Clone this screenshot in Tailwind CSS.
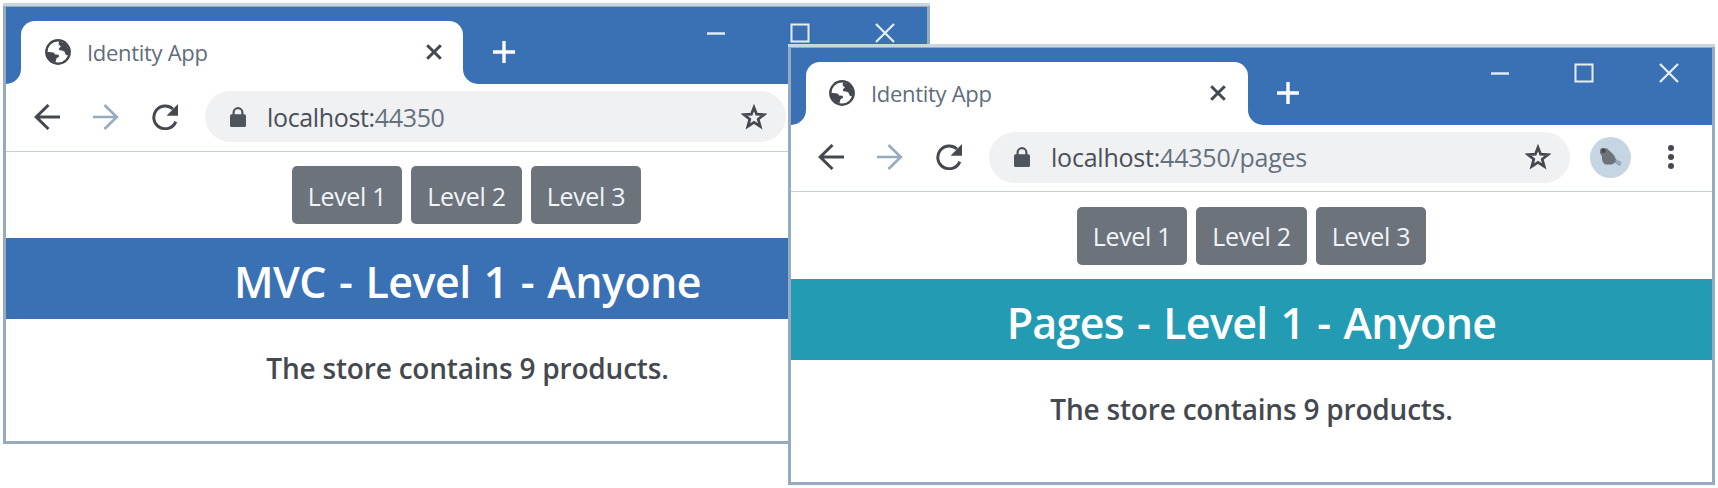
<!DOCTYPE html>
<html lang="en">
<head>
<meta charset="utf-8">
<title>Identity App</title>
<script src="https://cdn.jsdelivr.net/npm/@tailwindcss/browser@4"></script>
</head>
<body class="relative w-[1718px] h-[488px] overflow-hidden bg-white font-['Open_Sans','Noto_Sans',sans-serif] text-[#45484f]">

<svg class="hidden">
  <symbol id="globe" viewBox="0 0 26 26">
    <circle cx="13" cy="13" r="11.7" fill="none" stroke="currentColor" stroke-width="2.4"/>
    <path fill="currentColor" d="M14 2.2 21 4.8 24.4 12.5 22.8 16.4 20.6 15.6 19.6 12.8 17.2 11.6 14.4 11.2 13.8 9.4 16 7.2 13.6 5.4Z"/>
    <path fill="currentColor" d="M1.6 12.8 8.6 13.6 10.2 15.4 13.6 15.8 14.2 17.4 11.4 19.4 10.4 23.4 6.6 22 3 18Z"/>
  </symbol>
  <symbol id="close" viewBox="0 0 16 16"><path d="M1.2 1.2 14.8 14.8M14.8 1.2 1.2 14.8" stroke="currentColor" stroke-width="3" fill="none"/></symbol>
  <symbol id="plus" viewBox="0 0 22 22"><path d="M11 0V22M0 11H22" stroke="currentColor" stroke-width="3.4" fill="none"/></symbol>
  <symbol id="min" viewBox="0 0 20 20"><path d="M1 10.5H19" stroke="currentColor" stroke-width="2.4" fill="none"/></symbol>
  <symbol id="max" viewBox="0 0 20 20"><rect x="1.5" y="1.5" width="17" height="17" stroke="currentColor" stroke-width="2" fill="none"/></symbol>
  <symbol id="exit" viewBox="0 0 20 20"><path d="M1 1 19 19M19 1 1 19" stroke="currentColor" stroke-width="2.2" fill="none"/></symbol>
  <symbol id="back" viewBox="0 0 26 26"><path d="M26 13H2M14.5 1 2.2 13 14.5 25" stroke="currentColor" stroke-width="3" fill="none"/></symbol>
  <symbol id="forward" viewBox="0 0 26 26"><path d="M0 13H24M11.5 1 23.8 13 11.5 25" stroke="currentColor" stroke-width="2.6" fill="none"/></symbol>
  <symbol id="reload" viewBox="0 0 26 26"><path d="M23.8 17.6A11.4 11.4 0 1 1 21 5" stroke="currentColor" stroke-width="3" fill="none"/><path d="M26 0V11.8H14.6Z" fill="currentColor"/></symbol>
  <symbol id="lock" viewBox="0 0 16 20"><path d="M3.6 9V5.6a4.4 4.4 0 0 1 8.8 0V9" stroke="currentColor" stroke-width="2.2" fill="none"/><rect y="7.2" width="16" height="12.8" rx="1.6" fill="currentColor"/></symbol>
  <symbol id="star" viewBox="0 0 26 26"><path d="M13 3.4 15.6 10.2 23 10.6 17.2 15.2 19.2 22.4 13 18.3 6.8 22.4 8.8 15.2 3 10.6 10.4 10.2Z" stroke="currentColor" stroke-width="2.7" fill="none"/></symbol>
  <symbol id="bird" viewBox="0 0 24 20"><path d="M1 4Q1 1 4 1L8 1.5 15 8 17 12.5 22.5 15.5 20.5 19 16 15.5 13 17.5H6Q2.5 15 3 9.5L1 6Z" fill="#6c737b"/><path d="M17 12.5 22.5 15.5 20.5 19 16 15.5Z" fill="#96aac0"/><circle cx="4.5" cy="3.8" r="2.2" fill="#45484f"/></symbol>
</svg>

<!-- MVC window -->
<section class="absolute left-[3px] top-[3px] w-[927px] h-[441px] flex flex-col bg-white border-[#96aac0] border-x-[3px] border-b-[3px]">
  <div class="h-1 shrink-0 -mx-[3px] bg-[#c9d6e1] border-b border-[#96aac0]"></div>
  <header class="h-[77px] shrink-0 flex bg-[#3a71b5]">
    <div class="flex items-end">
      <div class="w-[15px] h-[30px] bg-white"><div class="h-full bg-[#3a71b5] rounded-br-[15px]"></div></div>
      <div class="w-[442px] h-[63px] pb-px bg-white rounded-t-[14px] flex items-center pl-[24px] pr-[21px]">
        <svg class="w-[26px] h-[26px]"><use href="#globe"/></svg>
        <span class="ml-[16px] text-[22px] leading-[30px] tracking-[-0.3px] text-[#5f6d7c] whitespace-nowrap">Identity App</span>
        <svg class="ml-auto w-4 h-4"><use href="#close"/></svg>
      </div>
      <div class="w-[15px] h-[30px] bg-white"><div class="h-full bg-[#3a71b5] rounded-bl-[15px]"></div></div>
      <svg class="ml-[15px] mb-[21px] w-[22px] h-[22px] text-white"><use href="#plus"/></svg>
    </div>
    <div class="ml-auto h-[51px] flex text-[#e8eef5]">
      <div class="w-[84.5px] grid place-items-center"><svg class="w-5 h-5"><use href="#min"/></svg></div>
      <div class="w-[84.5px] grid place-items-center"><svg class="w-5 h-5"><use href="#max"/></svg></div>
      <div class="w-[84.5px] grid place-items-center"><svg class="w-5 h-5"><use href="#exit"/></svg></div>
    </div>
  </header>
  <nav class="h-[68px] shrink-0 flex items-center pb-[2px] pl-7 border-b border-[#c3cfda]">
    <svg class="w-[26px] h-[26px]"><use href="#back"/></svg>
    <svg class="ml-[33px] w-[26px] h-[26px] text-[#96aac0]"><use href="#forward"/></svg>
    <svg class="ml-[33px] w-[26px] h-[26px]"><use href="#reload"/></svg>
    <div class="ml-[27px] w-[581px] h-[51px] rounded-full bg-[#eff1f3] flex items-center pl-[25px] pr-[19px]">
      <svg class="w-4 h-5 text-[#50545c]"><use href="#lock"/></svg>
      <span class="ml-[21px] text-[25px] leading-[34px] tracking-[-0.35px] text-[#65717f]"><span class="text-[#4a4f58]">localhost:</span>44350</span>
      <svg class="ml-auto w-[26px] h-[26px]"><use href="#star"/></svg>
    </div>
    <div class="ml-5 w-[41px] h-[41px] rounded-full bg-[#c5d5e1] grid place-items-center"><svg class="w-6 h-5"><use href="#bird"/></svg></div>
    <div class="ml-9 flex flex-col gap-[3px]"><i class="w-1.5 h-1.5 rounded-full bg-current"></i><i class="w-1.5 h-1.5 rounded-full bg-current"></i><i class="w-1.5 h-1.5 rounded-full bg-current"></i></div>
  </nav>
  <main class="text-center">
    <div class="flex justify-center gap-[9px] pt-[14px] pb-[14px] text-[25px] leading-[34px] tracking-[-0.3px] text-[#eff4f9]">
      <button class="w-[110.5px] h-[58px] pt-px rounded-[5px] bg-[#6c737b]">Level 1</button>
      <button class="w-[110.5px] h-[58px] pt-px rounded-[5px] bg-[#6c737b]">Level 2</button>
      <button class="w-[110.5px] h-[58px] pt-px rounded-[5px] bg-[#6c737b]">Level 3</button>
    </div>
    <h1 class="h-[81px] pt-[3px] pl-[2px] bg-[#3a71b5] text-white text-[43px] leading-[81px] font-semibold tracking-[-0.55px] [word-spacing:2.5px]">MVC - Level 1 - Anyone</h1>
    <p class="pt-[30px] pl-[2px] text-[28px] leading-[38px] font-semibold tracking-[-0.2px]">The store contains 9 products.</p>
  </main>
</section>

<!-- Razor Pages window -->
<section class="absolute left-[788px] top-[44px] w-[927px] h-[441px] flex flex-col bg-white border-[#96aac0] border-x-[3px] border-b-[3px]">
  <div class="h-1 shrink-0 -mx-[3px] bg-[#c9d6e1] border-b border-[#96aac0]"></div>
  <header class="h-[77px] shrink-0 flex bg-[#3a71b5]">
    <div class="flex items-end">
      <div class="w-[15px] h-[30px] bg-white"><div class="h-full bg-[#3a71b5] rounded-br-[15px]"></div></div>
      <div class="w-[442px] h-[63px] pb-[2px] bg-white rounded-t-[14px] flex items-center pl-[23px] pr-[22px]">
        <svg class="w-[26px] h-[26px]"><use href="#globe"/></svg>
        <span class="ml-[16px] text-[22px] leading-[30px] tracking-[-0.3px] text-[#5f6d7c] whitespace-nowrap">Identity App</span>
        <svg class="ml-auto w-4 h-4"><use href="#close"/></svg>
      </div>
      <div class="w-[15px] h-[30px] bg-white"><div class="h-full bg-[#3a71b5] rounded-bl-[15px]"></div></div>
      <svg class="ml-[14px] mb-[21px] w-[22px] h-[22px] text-white"><use href="#plus"/></svg>
    </div>
    <div class="ml-auto h-[50px] flex pr-px text-[#e8eef5]">
      <div class="w-[84.5px] grid place-items-center"><svg class="w-5 h-5"><use href="#min"/></svg></div>
      <div class="w-[84.5px] grid place-items-center"><svg class="w-5 h-5"><use href="#max"/></svg></div>
      <div class="w-[84.5px] grid place-items-center"><svg class="w-5 h-5"><use href="#exit"/></svg></div>
    </div>
  </header>
  <nav class="h-[67px] shrink-0 flex items-center pb-[2px] pl-[27px] border-b border-[#c3cfda]">
    <svg class="w-[26px] h-[26px]"><use href="#back"/></svg>
    <svg class="ml-[33px] w-[26px] h-[26px] text-[#96aac0]"><use href="#forward"/></svg>
    <svg class="ml-[33px] w-[26px] h-[26px]"><use href="#reload"/></svg>
    <div class="ml-[27px] w-[581px] h-[51px] rounded-full bg-[#eff1f3] flex items-center pl-[25px] pr-[19px]">
      <svg class="w-4 h-5 text-[#50545c]"><use href="#lock"/></svg>
      <span class="ml-[21px] text-[25px] leading-[34px] tracking-[-0.22px] text-[#65717f]"><span class="text-[#4a4f58]">localhost:</span>44350/pages</span>
      <svg class="ml-auto w-[26px] h-[26px]"><use href="#star"/></svg>
    </div>
    <div class="ml-5 w-[41px] h-[41px] rounded-full bg-[#c5d5e1] grid place-items-center"><svg class="w-6 h-5"><use href="#bird"/></svg></div>
    <div class="ml-[37px] flex flex-col gap-[3px]"><i class="w-1.5 h-1.5 rounded-full bg-current"></i><i class="w-1.5 h-1.5 rounded-full bg-current"></i><i class="w-1.5 h-1.5 rounded-full bg-current"></i></div>
  </nav>
  <main class="text-center">
    <div class="flex justify-center gap-[9px] pt-[15px] pb-[14px] text-[25px] leading-[34px] tracking-[-0.3px] text-[#eff4f9]">
      <button class="w-[110.5px] h-[58px] rounded-[5px] bg-[#6c737b]">Level 1</button>
      <button class="w-[110.5px] h-[58px] rounded-[5px] bg-[#6c737b]">Level 2</button>
      <button class="w-[110.5px] h-[58px] rounded-[5px] bg-[#6c737b]">Level 3</button>
    </div>
    <h1 class="h-[81px] pt-[3px] bg-[#239bb3] text-white text-[43px] leading-[81px] font-semibold tracking-[-0.7px] [word-spacing:2.5px]">Pages - Level 1 - Anyone</h1>
    <p class="pt-[30px] text-[28px] leading-[38px] font-semibold tracking-[-0.2px]">The store contains 9 products.</p>
  </main>
</section>
</body>
</html>
